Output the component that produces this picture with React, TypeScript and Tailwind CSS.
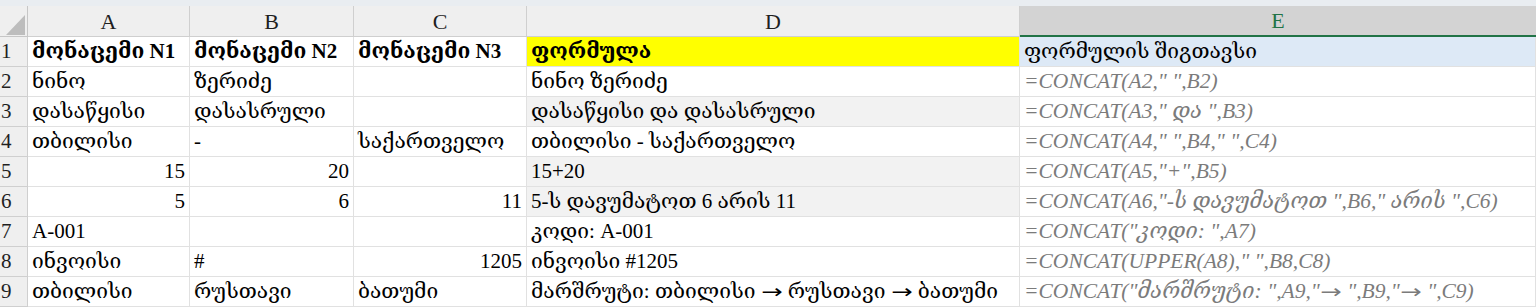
import React from "react";

const FONT = { fontFamily: '"Liberation Serif", "DejaVu Serif", "DejaVu Sans", serif' };

type Cell = { t?: string; r?: boolean; b?: boolean; bg?: string };

const rows: { d: [Cell, Cell, Cell, Cell, Cell] }[] = [
  { d: [{ t: "მონაცემი N1", b: true }, { t: "მონაცემი N2", b: true }, { t: "მონაცემი N3", b: true }, { t: "ფორმულა", b: true, bg: "bg-[#ffff00]" }, { t: "ფორმულის შიგთავსი", bg: "bg-[#dde9f6]" }] },
  { d: [{ t: "ნინო" }, { t: "ზერიძე" }, {}, { t: "ნინო ზერიძე" }, { t: '=CONCAT(A2," ",B2)' }] },
  { d: [{ t: "დასაწყისი" }, { t: "დასასრული" }, {}, { t: "დასაწყისი და დასასრული", bg: "bg-[#f2f2f2]" }, { t: '=CONCAT(A3," და ",B3)' }] },
  { d: [{ t: "თბილისი" }, { t: "-" }, { t: "საქართველო" }, { t: "თბილისი - საქართველო" }, { t: '=CONCAT(A4," ",B4," ",C4)' }] },
  { d: [{ t: "15", r: true }, { t: "20", r: true }, {}, { t: "15+20", bg: "bg-[#f2f2f2]" }, { t: '=CONCAT(A5,"+",B5)' }] },
  { d: [{ t: "5", r: true }, { t: "6", r: true }, { t: "11", r: true }, { t: "5-ს დავუმატოთ 6 არის 11", bg: "bg-[#f2f2f2]" }, { t: '=CONCAT(A6,"-ს დავუმატოთ ",B6," არის ",C6)' }] },
  { d: [{ t: "A-001" }, {}, {}, { t: "კოდი: A-001" }, { t: '=CONCAT("კოდი: ",A7)' }] },
  { d: [{ t: "ინვოისი" }, { t: "#" }, { t: "1205", r: true }, { t: "ინვოისი #1205" }, { t: '=CONCAT(UPPER(A8)," ",B8,C8)' }] },
  { d: [{ t: "თბილისი" }, { t: "რუსთავი" }, { t: "ბათუმი" }, { t: "მარშრუტი: თბილისი → რუსთავი → ბათუმი" }, { t: '=CONCAT("მარშრუტი: ",A9,"→ ",B9,"→ ",C9)' }] },
];

const widths = ["w-[162px]", "w-[164px]", "w-[173px]", "w-[493px]", "w-[516px]"];
const letters = ["A", "B", "C", "D", "E"];

function renderText(t?: string) {
  if (!t) return null;
  const parts = t.split("→");
  return (
    <span className="whitespace-pre">
      {parts.map((p, i) => (
        <React.Fragment key={i}>
          {p}
          {i < parts.length - 1 && (
            <span style={{ fontFamily: '"DejaVu Sans", sans-serif' }} className="inline-block scale-x-[1.35] mx-[3px] text-[19px]">
              →
            </span>
          )}
        </React.Fragment>
      ))}
    </span>
  );
}

export default function App() {
  return (
    <div className="w-[1536px] h-[308px] overflow-hidden bg-white text-black" style={FONT}>
      <div className="h-[6px] bg-[#e9edf1]" />
      <div className="flex h-[31px]">
        <div className="w-[28px] h-[31px] bg-[#efefef] border-r border-b border-[#c6c6c6] relative shrink-0">
          <svg className="absolute left-[6px] top-[9px]" width="19" height="20" viewBox="0 0 19 20">
            <polygon points="19,0 19,20 0,20" fill="#bdbdbd" />
          </svg>
        </div>
        {letters.map((l, i) =>
          i === 4 ? (
            <div key={l} className={`${widths[i]} shrink-0 h-[31px] bg-[#d3d3d3] border-b-2 border-[#217346] flex items-center justify-center text-[22px] text-[#217346]`}>
              {l}
            </div>
          ) : (
            <div key={l} className={`${widths[i]} shrink-0 h-[31px] bg-[#efefef] border-r border-b border-[#cfcfcf] flex items-center justify-center text-[22px] text-[#1f1f1f]`}>
              {l}
            </div>
          )
        )}
      </div>
      {rows.map((row, ri) => (
        <div key={ri} className="flex h-[30px]">
          <div className="w-[28px] shrink-0 h-[30px] bg-[#efefef] border-r border-b border-[#cfcfcf] flex items-end pb-[3px] pl-[1px] text-[21px] leading-[24px] text-[#1f1f1f]">
            {ri + 1}
          </div>
          {row.d.map((c, ci) => (
            <div
              key={ci}
              className={`${widths[ci]} shrink-0 h-[30px] border-b border-r border-[#e1e1e1] ${c.bg ?? ""} flex items-end pb-[3px] px-[4px] overflow-hidden whitespace-nowrap leading-[24px] ${c.r ? "justify-end" : ""} ${c.b ? "font-bold" : ""} ${ci === 4 && ri > 0 ? "italic text-[#7b7b7b] text-[21.5px]" : "text-[21px]"}`}
            >
              {renderText(c.t)}
            </div>
          ))}
        </div>
      ))}
    </div>
  );
}
